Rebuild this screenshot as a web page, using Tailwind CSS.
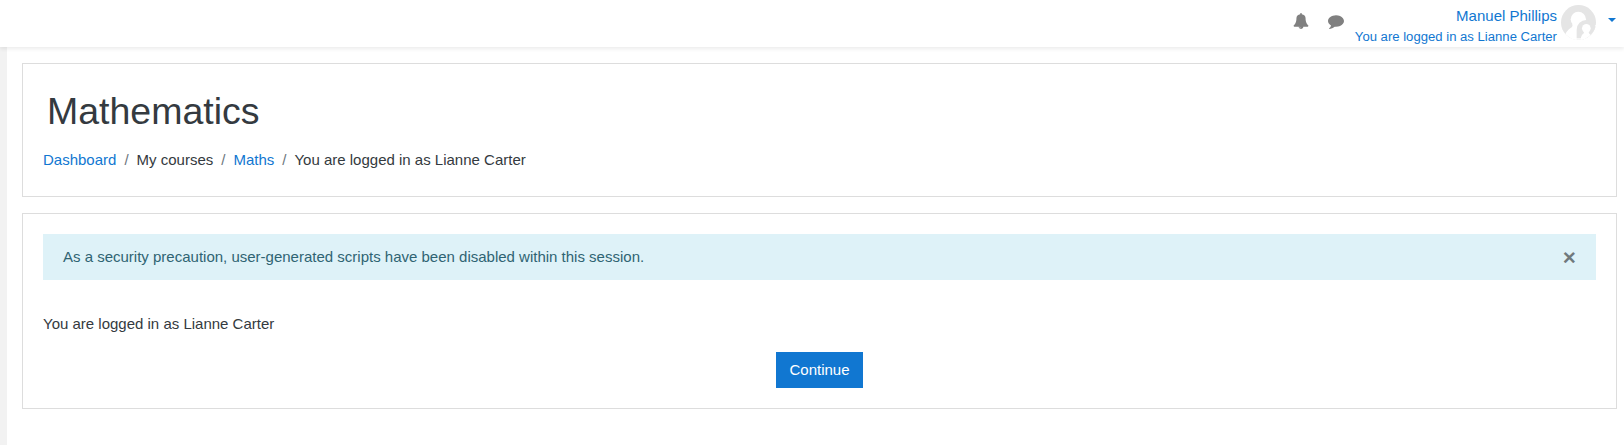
<!DOCTYPE html>
<html lang="en">
<head>
<meta charset="utf-8">
<title>Mathematics</title>
<script src="https://cdn.jsdelivr.net/npm/@tailwindcss/browser@4"></script>
</head>
<body class="bg-white text-[#343a40] text-[15px] leading-[22.5px] font-['Liberation_Sans',Arial,sans-serif] h-[445px] overflow-hidden flex flex-col">
  <header class="relative z-10 h-[47px] shrink-0 bg-white shadow-[0_2px_4px_rgba(0,0,0,0.08)] flex justify-end items-start">
    <svg class="size-4 mt-[13px] mr-[19px] fill-[#808080]" viewBox="0 0 1792 1792"><path d="M912 1696q0-16-16-16-59 0-101.500-42.500t-42.500-101.500q0-16-16-16t-16 16q0 73 51.500 124.500t124.500 51.500q16 0 16-16zm816-288q0 52-38 90t-90 38h-448q0 106-75 181t-181 75-181-75-75-181h-448q-52 0-90-38t-38-90q50-42 91-88t85-119.500 74.500-158.500 50-206 19.500-260q0-152 117-282.500t307-158.500q-8-19-8-39 0-40 28-68t68-28 68 28 28 68q0 20-8 39 190 28 307 158.500t117 282.500q0 139 19.500 260t50 206 74.500 158.500 85 119.500 91 88z"/></svg>
    <svg class="size-4 mt-[13px] mr-[11px] fill-[#808080]" viewBox="0 0 1792 1792"><path d="M1792 896q0 174-120 321.500t-326 233-450 85.500q-70 0-145-8-198 175-460 242-49 14-114 22-17 2-30.500-9t-17.500-29v-1q-3-4-.5-12t2-10 4.500-9.500l6-9 7-8.500 8-9q7-8 31-34.500t34.500-38 31-39.500 32.500-51 27-59 26-76q-157-89-247.500-220t-90.500-281q0-130 71-248.500t191-204.500 286-136.500 348-50.500q244 0 450 85.500t326 233 120 321.500z"/></svg>
    <a class="mt-[5px] flex flex-col items-end text-[#1177d1]">
      <span>Manuel Phillips</span>
      <span class="text-[13.125px] leading-[17px]">You are logged in as Lianne Carter</span>
    </a>
    <svg class="size-[35px] mt-[5px] ml-1" viewBox="0 0 105 105">
      <defs><clipPath id="disc"><circle cx="52.500" cy="52.500" r="52.500"/></clipPath></defs>
      <g clip-path="url(#disc)">
        <rect width="105" height="105" fill="#e5e5e5"/>
        <circle cx="52" cy="43" r="23" fill="#fff"/>
        <path d="M34 57Q36 64 32 67Q14 76 7 105H105V60H70Z" fill="#fff"/>
        <path d="M47 105V74A29 29 0 1 1 105 74V105Z" fill="#e5e5e5"/>
        <circle cx="76" cy="70" r="13" fill="#fff"/>
        <path d="M69 80Q69 85 66 87Q60 91 59 105H93Q92 91 86 87Q83 85 83 80Z" fill="#fff"/>
        <rect y="99" width="105" height="6" fill="#fff" opacity=".7"/>
      </g>
    </svg>
    <span class="mt-[18px] ml-3 mr-2 border-x-4 border-t-4 border-x-transparent border-t-[#1177d1]"></span>
  </header>
  <div class="flex grow">
    <aside class="w-[7px] bg-[#f2f2f2]"></aside>
    <main class="grow pt-4 pl-[15px] pr-[7px]">
      <section class="h-[134px] border border-[#dddddd] pl-5 pt-[25px]">
        <h1 class="text-[37.5px] leading-[45px] pl-1">Mathematics</h1>
        <nav class="mt-[15px] flex gap-2">
          <a class="text-[#1177d1]">Dashboard</a><span class="text-[#6c757d]">/</span>
          <span>My courses</span><span class="text-[#6c757d]">/</span>
          <a class="text-[#1177d1]">Maths</a><span class="text-[#6c757d]">/</span>
          <span>You are logged in as Lianne Carter</span>
        </nav>
      </section>
      <section class="mt-4 h-[196px] border border-[#dddddd] px-5 pt-5">
        <div class="h-[46px] bg-[#def2f8] text-[#2f6473] px-5 flex items-center justify-between">
          <span>As a security precaution, user-generated scripts have been disabled within this session.</span>
          <button class="mt-0.5 text-[22.5px] leading-none font-bold text-black/50">×</button>
        </div>
        <p class="mt-[33px]">You are logged in as Lianne Carter</p>
        <div class="mt-[16.5px] flex justify-center">
          <button class="h-9 w-[87px] bg-[#1177d1] text-white">Continue</button>
        </div>
      </section>
    </main>
  </div>
</body>
</html>
